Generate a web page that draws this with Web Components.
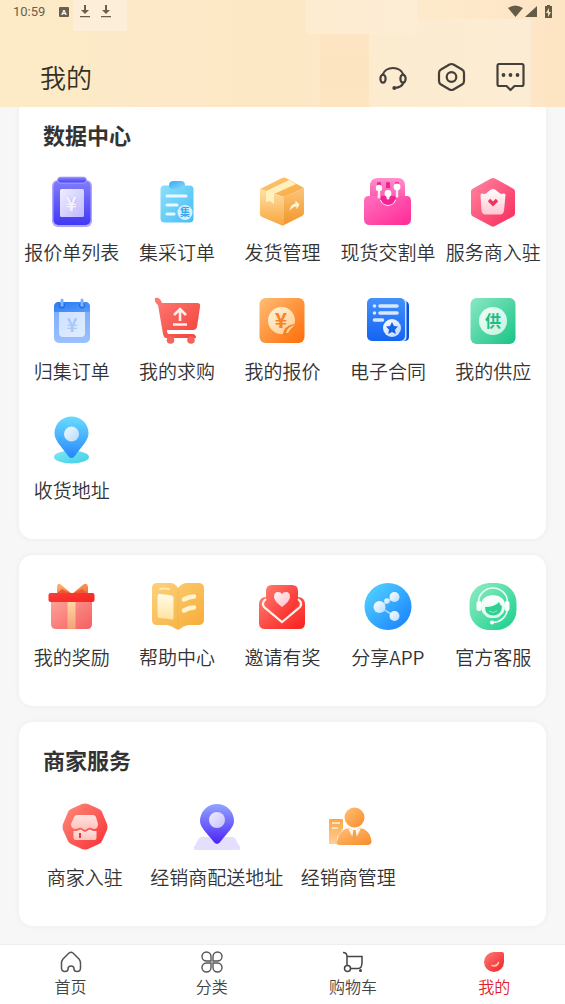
<!DOCTYPE html>
<html lang="zh-CN">
<head>
<meta charset="utf-8">
<meta name="viewport" content="width=device-width, initial-scale=1">
<title>我的</title>
<style>
    html, body {
        margin: 0;
        background: #f7f7f7;
        font-family: "Noto Sans CJK SC", "Noto Sans", sans-serif;
        color: #333333;
    }
</style>
</head>
<body>
<mine-page></mine-page>

<script>
// gradient helpers, ids only live inside the shadow root of one icon
const lin = (id, from, to, dir = 'x1="0" y1="0" x2="1" y2="1"') =>
    `<linearGradient id="${id}" ${dir}><stop offset="0" stop-color="${from}"/><stop offset="1" stop-color="${to}"/></linearGradient>`;
const down = 'x1="0" y1="0" x2="0" y2="1"';

const ICONS = {
    quote: `
        <defs>${lin("a", "#8b84fa", "#4640f6", down)}${lin("b", "#f1efff", "#bcb8fb")}${lin("c", "#827cfa", "#4138f5", down)}</defs>
        <rect x="8" y="6" width="40" height="47" rx="6" fill="#aaa6fd"/>
        <rect x="9.500" y="7" width="37" height="44" rx="5" fill="url(#c)"/>
        <rect x="13.500" y="3" width="29" height="6" rx="3" fill="url(#a)" stroke="#b3b0fd" stroke-width=".8"/>
        <rect x="16" y="15" width="24" height="28" rx="1.500" fill="url(#b)"/>
        <text x="28" y="37" font-size="20" font-weight="bold" fill="#a6a0f1" text-anchor="middle">¥</text>
        <text x="27.500" y="36.500" font-size="20" font-weight="bold" fill="#f3f1ff" text-anchor="middle">¥</text>`,
    order: `
        <defs>${lin("a", "#8be0fb", "#48bdf6")}${lin("b", "#35aaf2", "#8adcfb")}</defs>
        <rect x="11.500" y="11.500" width="33" height="37" rx="4" fill="url(#a)"/>
        <path d="M25 7h7q4 0 4 4 0 4-4 4h-8q-4 0-4-4t5-4z" fill="url(#b)"/>
        <g stroke="#eaf9ff" stroke-width="3" stroke-linecap="round"><path d="M18 22h19M18 31h10M18 40h7"/></g>
        <circle cx="36" cy="38.500" r="7.500" fill="#d5f1ff"/>
        <text x="36" y="42" font-size="10" font-weight="bold" fill="#38a9ee" text-anchor="middle">集</text>`,
    parcel: `
        <defs>${lin("a", "#fdca7c", "#f9a63b")}${lin("b", "#ffe0a5", "#f8a640", down)}${lin("c", "#fbc57a", "#f2952a", down)}</defs>
        <path d="M6 15 28 4q2-1 4 0l18 10-20 9z" fill="url(#a)"/>
        <path d="M6 15l24 8v28q-1 1-3 0L8 43q-2-1-2-3z" fill="url(#b)"/>
        <path d="M30 23l20-9v25q0 2-2 3L30 51z" fill="url(#c)"/>
        <path d="M12 17 35 6l7 4-22 10v10l-4-3-4 1z" fill="#fff0bd"/>
        <path d="M35.500 37q1-7 6-7.500v-3l4 4-3 5v-3q-4 0-7 4.500z" fill="#fff5d6"/>`,
    spot: `
        <defs>${lin("a", "#ff92cd", "#ff4fa8", down)}${lin("b", "#ff71be", "#ff2996")}</defs>
        <path d="M10 26V12q0-8 8-8h20q7 0 7 8v14z" fill="url(#a)"/>
        <path d="M17 22V9q0-1 2-1t2 1v13M26 14V9q0-1 2-1t2 1v5M35 22V9q0-1 2-1t2 1v13" fill="#ee238f"/>
        <path d="M9 22h10q1 9 9 10 8-1 9-10h10q4 0 4 5v18q0 6-6 6H10q-6 0-6-6V27q0-5 5-5z" fill="url(#b)"/>
        <path d="M20 22h16q-1 9-8 9t-8-9z" fill="#f12494"/>
        <g stroke="#ffe6f4" stroke-width="3" stroke-linecap="round"><path d="M19 14v9M28 19v5M37 13v9"/></g>
        <g fill="#fff"><circle cx="19" cy="14" r="3.200"/><circle cx="28" cy="19.500" r="3.400"/><circle cx="37" cy="13" r="3.400"/></g>`,
    provider: `
        <defs>${lin("a", "#ff88a1", "#f8285a")}${lin("b", "#fff", "#ffc7d2", down)}</defs>
        <path d="M26 4.500q2-1 4 0l18 10q2 1 2 3v22q0 2-2 3L30 52q-2 1-4 0L8 42.500q-2-1-2-3v-22q0-2 2-3z" fill="url(#a)"/>
        <path d="M15.500 21q0-2 2-1.500 2 1 4-.5l4.500-3.500q2-1 4 0l4.500 3.500q2 1.500 4 .5 2-.5 2 1.500l-1.500 15.500q-.5 4-4 4H20.500q-3.500 0-4-4z" fill="url(#b)"/>
        <path d="M24 26l4 4 4-4" fill="none" stroke="#f3325f" stroke-width="3.400"/>`,
    calendar: `
        <defs>${lin("a", "#76a8fa", "#9bc1fd", down)}${lin("b", "#2679f3", "#5a9cf9")}${lin("c", "#cfe1ff", "#e1edff")}</defs>
        <rect x="10" y="9" width="36" height="41" rx="5" fill="url(#a)"/>
        <path d="M10 19v-5q0-5 5-5h26q5 0 5 5v5z" fill="url(#b)"/>
        <path d="M15 19h26v21q0 4-4 4H19q-4 0-4-4z" fill="url(#c)"/>
        <g stroke="#1764df" fill="none" stroke-width="1"><circle cx="18" cy="12.500" r="2.500"/><circle cx="38" cy="12.500" r="2.500"/></g>
        <path d="M18 7v5M38 7v5" stroke="#7db2ff" stroke-width="3" stroke-linecap="round"/>
        <text x="28" y="39" font-size="19" font-weight="bold" fill="#a9c8fb" text-anchor="middle">¥</text>`,
    buy: `
        <defs>${lin("a", "#fd7c74", "#f34039")}</defs>
        <path d="M6 5q5-1 7 5h35q4 0 3 4l-3 20q-1 3-4 3H18l1 4h24q4 0 4 4H17q-2 0-3-4L9 12q-4-3-3-7z" fill="url(#a)"/>
        <path d="M18 37.500h28v2.500H18.600z" fill="#fff"/>
        <circle cx="21.500" cy="47" r="3.800" fill="#f4635c"/><circle cx="42" cy="47" r="3.800" fill="#f4635c"/>
        <path d="M31 28V17M25 22l6-6 6 6M24 31.500h14" fill="none" stroke="#fff0ee" stroke-width="2.600"/>`,
    price: `
        <defs>${lin("a", "#ffbd75", "#fe6c07")}${lin("b", "#fff6df", "#ffca88")}</defs>
        <rect x="5.500" y="5" width="45" height="45" rx="6" fill="url(#a)"/>
        <circle cx="27.500" cy="27.500" r="13.500" fill="url(#b)"/>
        <text x="27" y="35" font-size="21" font-weight="bold" fill="#f98322" text-anchor="middle">¥</text>
        <path d="M29 42q0-9 11-11l3 3-10 9z" fill="#fb801f"/><path d="M32 40q1-6 9-8-4 3-7 8z" fill="#ffd09c"/>`,
    contract: `
        <defs>${lin("a", "#4391fb", "#1464f2", down)}${lin("b", "#fff", "#b9d5ff")}</defs>
        <path d="M38 8h6q5 0 5 5v31q0 4-5 4h-9z" fill="#0753d9"/>
        <rect x="36" y="6" width="10.500" height="42" rx="4" fill="#cfe2ff"/>
        <rect x="7" y="5" width="38" height="43" rx="5" fill="url(#a)"/>
        <g stroke="#d7e7ff" stroke-width="3.600" stroke-linecap="round"><path d="M14.500 13h0M20 13h17M14.500 20h0M20 20h17M14.500 27h8"/></g>
        <circle cx="32" cy="35" r="9" fill="url(#b)"/>
        <path d="M32 29l2 4 4 .6-3 3.100.8 4.300-3.800-2-3.800 2 .8-4.300-3-3.100 4-.6z" fill="#1a63e8"/>`,
    supply: `
        <defs>${lin("a", "#8be8c3", "#18c487")}${lin("b", "#effff8", "#c3f3df")}</defs>
        <rect x="5.500" y="5" width="45" height="46" rx="6" fill="url(#a)"/>
        <circle cx="28" cy="28" r="14" fill="url(#b)"/>
        <text x="28" y="34" font-size="16" font-weight="bold" fill="#20bc86" text-anchor="middle">供</text>`,
    address: `
        <defs>${lin("a", "#69dcfd", "#2786ff", down)}${lin("b", "#81e7f3", "#3ecfe9")}${lin("c", "#f1f9ff", "#b5dcfa")}</defs>
        <ellipse cx="27.500" cy="45" rx="17.500" ry="6.500" fill="url(#b)"/>
        <path d="M27.500 46Q25 46 22 41C16 33 10.500 28 10.500 21a17 16.500 0 0 1 34 0c0 7-5.500 12-11.500 20q-3 5-5.500 5z" fill="url(#a)"/>
        <circle cx="27.500" cy="22" r="7.500" fill="url(#c)"/>`,
    gift: `
        <defs>${lin("a", "#fda19a", "#f55f5f")}${lin("b", "#f73e39", "#fb2420")}${lin("c", "#ffb375", "#f26c34")}${lin("d", "#ffd8a4", "#f4a276", down)}</defs>
        <path d="M27 14 16 5q-3-1-3 4v6zM29 14 40 5q4-1 4 4v6z" fill="url(#c)"/>
        <path d="M26 14l-8-4-5 4zM30 14l8-4 5 4z" fill="#e85b33"/>
        <path d="M7 22h41v23q0 5-5 5H12q-5 0-5-5z" fill="url(#a)"/>
        <rect x="23.500" y="22" width="8" height="28" fill="url(#d)"/>
        <rect x="4.500" y="14" width="46" height="9" rx="2" fill="url(#b)"/>`,
    help: `
        <defs>${lin("a", "#fcd27c", "#f7ab36")}${lin("b", "#fffce9", "#ffe4a1", down)}</defs>
        <path d="M8 4h13q5 0 8 5 4-5 9-5h11q6 0 6 5v32q0 5-6 5H39q-5 1-8 4-2 1-4 0-4-3-9-4H8q-5 0-5-5V9q0-5 5-5z" fill="url(#a)"/>
        <path d="M29 9v41" stroke="#eea438" stroke-width=".6" opacity=".4"/>
        <path d="M8.500 17q0-2 2-2 6 0 12 1.500 2 .5 2 2V39q0 2-2 1.500-6-1.500-12-1.500-2 0-2-2z" fill="url(#b)"/>
        <path d="M11 10q5-1 9 0" stroke="#ffe9b9" stroke-width="2" stroke-linecap="round" fill="none"/>
        <path d="M35 20.500q5-3 10-3M35 31.500q5-3 10-3" stroke="#fff4cc" stroke-width="4.500" stroke-linecap="round" fill="none"/>`,
    invite: `
        <defs>${lin("a", "#ff796d", "#f91e1e")}${lin("b", "#fff5f8", "#ffb8c8")}</defs>
        <path d="M5 26q0-8 7-8h32q7 0 7 8v18q0 6-6 6H11q-6 0-6-6z" fill="url(#a)"/>
        <path d="M12 26V12q0-6 6-6h20q6 0 6 6v14L28 43z" fill="url(#a)"/>
        <path d="M12 20q-5 4-2 8l18 15 18-15q3-4-2-8" fill="none" stroke="#fff3ea" stroke-width="2.200"/>
        <path d="M28 28q-8-6-8-10 0-5 4-5 3 0 4 2 1-2 4-2 4 0 4 5 0 4-8 10z" fill="url(#b)"/>`,
    share: `
        <defs>${lin("a", "#56d9ff", "#157cff")}${lin("b", "#fff", "#b4ddff")}</defs>
        <circle cx="28" cy="27.500" r="23.500" fill="url(#a)"/>
        <path d="M34 18 20 28l14 9" fill="none" stroke="#9cd5ff" stroke-width="1.800"/>
        <g fill="url(#b)"><circle cx="19.500" cy="28" r="6"/><circle cx="34.500" cy="18" r="5"/><circle cx="27" cy="22" r="2.800"/><circle cx="34.500" cy="37" r="5"/></g>`,
    support: `
        <defs>${lin("a", "#92edc4", "#17cf8b")}${lin("b", "#fff", "#ddfaec", down)}</defs>
        <rect x="4.500" y="4" width="47" height="47" rx="20" fill="url(#a)"/>
        <path d="M13.500 23a14.500 14 0 0 1 29 0" fill="none" stroke="#e8fff5" stroke-width="1.600"/>
        <rect x="11.500" y="22" width="5" height="10" rx="2.500" fill="#fff"/><rect x="39.500" y="22" width="5" height="10" rx="2.500" fill="#fff"/>
        <path d="M16 27q0-10 12-11 12 1 12 11 0 7-5 10-1 2-7 2t-7-2q-5-3-5-10z" fill="url(#b)"/>
        <path d="M20 28q10 0 14-5 1 3 3 4 0 9-9 9.500-8-.5-8-8.500z" fill="#30d092"/>
        <path d="M24 32q4 3 8 0" fill="none" stroke="#8cebc2" stroke-width="1"/>
        <path d="M42.500 31q-3 12-15 12.500" fill="none" stroke="#eafff5" stroke-width="1.500"/><circle cx="27" cy="43.500" r="2" fill="#fff"/>`,
    shop: `
        <defs>${lin("a", "#ff8e7c", "#f72d34")}${lin("b", "#ffe3de", "#ffc1bd", down)}</defs>
        <path d="M25 5q3-1 6 0l11 5q2 1 3 3l5 12q1 3 0 6l-5 11q-1 2-3 3l-11 5q-3 1-6 0l-11-5q-2-1-3-3L6 31q-1-3 0-6l5-12q1-2 3-3z" fill="url(#a)"/>
        <path d="M20 16h16q2 0 3 2l2 7q0 5-4 5l-4.500-1.500L28 31l-4.500-2.500L19 30q-5 0-5-5l3-7q1-2 3-2z" fill="url(#b)"/>
        <path d="M16.500 32h3l4-1.500L28 33l4.500-2.500 4 1.500h3v7q0 2-2 2h-19q-2 0-2-2z" fill="url(#b)"/>
        <path d="M23 34v5" stroke="#e63b3e" stroke-width="2"/>`,
    delivery: `
        <defs>${lin("a", "#92a4ff", "#4a24f7", down)}${lin("b", "#f0edff", "#c6bffa")}</defs>
        <path d="M13 38h30q3 0 4 3l4 7q1 3-2 3H7q-3 0-2-3l4-7q1-3 4-3z" fill="#e5dffc"/>
        <path d="M28 45q-2 0-4-3C17 33 11 28 11 22a17 17 0 0 1 34 0c0 6-6 11-13 20q-2 3-4 3z" fill="url(#a)"/>
        <circle cx="28" cy="21" r="8" fill="url(#b)"/>`,
    dealer: `
        <defs>${lin("a", "#ffc178", "#f98a2b")}${lin("b", "#fda747", "#ffcf99", down)}</defs>
        <path d="M10 20h12q1 0 1 1v9l-6 9v6h-7q-1 0-1-1V21q0-1 1-1z" fill="url(#b)"/>
        <path d="M12 24h8M12 29h6" stroke="#fff3e1" stroke-width="1.600"/>
        <circle cx="34.500" cy="18.500" r="10" fill="url(#a)"/>
        <path d="M17 43q1-9 8-13l4-1 5.500 3 5.500-3 4 1q6 3 7.500 12 0 4-4 4H20q-4 0-3-3z" fill="url(#a)"/>
        <path d="M28 29l6.500 13L41 29l-6.500 3z" fill="#fff8ee"/>
        <path d="M33.500 31h2l1.500 8-2.500 4-2.500-4z" fill="#fb9e45"/>`
};

const LINE_ICONS = {
    headset: `<g fill="none" stroke="#443f38" stroke-width="2.200" stroke-linecap="round">
        <path d="M5.500 14a11 10 0 0 1 21 0M26.500 21.500q-2 5-8.500 5.500"/><ellipse cx="6" cy="17.700" rx="2.600" ry="4"/><ellipse cx="26" cy="17.700" rx="2.600" ry="4"/></g>
        <circle cx="17.300" cy="27" r="2" fill="#443f38"/>`,
    setting: `<g fill="none" stroke="#443f38" stroke-width="2.200">
        <path d="M13.500 3.500q2-1 4 0l8.500 5q2 1 2 3.500v8q0 2.500-2 3.500l-8.500 5q-2 1-4 0l-8.500-5Q3 22.500 3 20v-8q0-2.500 2-3.500z"/><circle cx="15.500" cy="16" r="4.800"/></g>`,
    message: `<path d="M4 3h23q1.500 0 1.500 2v18q0 2-1.500 2h-7.500L15.500 29l-4-4H4q-1.500 0-1.500-2V5q0-2 1.500-2z" fill="none" stroke="#443f38" stroke-width="2.200" stroke-linejoin="round"/>
        <g fill="#443f38"><circle cx="8.500" cy="14" r="1.900"/><circle cx="15.500" cy="14" r="1.900"/><circle cx="22.500" cy="14" r="1.900"/></g>`
};

const TAB_ICONS = {
    home: `<path d="M10 3q2-1.500 4 0l6 6q1.500 2 1.500 4v5q0 3.500-3.500 3.500-3 0-3-2.500a3 3 0 0 0-6 0q0 2.500-3 2.500-3.500 0-3.500-3.500v-5q0-2 1.500-4z" fill="none" stroke="#555" stroke-width="1.500"/>`,
    category: `<path d="M11 11H6.500A4.500 4.500 0 1 1 11 6.500zM13 11V6.500A4.500 4.500 0 1 1 17.500 11zM11 13v4.500A4.500 4.500 0 1 1 6.500 13zM13 13h4.500A4.500 4.500 0 1 1 13 17.500z" fill="none" stroke="#555" stroke-width="1.400"/>`,
    cart: `<path d="M2 2.500q4 0 4 4V15M6 6.500h15v6q0 6-4 6H9.500" fill="none" stroke="#444" stroke-width="1.500"/>
        <circle cx="6.500" cy="18.500" r="3" fill="none" stroke="#444" stroke-width="1.500"/><circle cx="19.500" cy="20.500" r="1.500" fill="#444"/>`,
    mine: `<defs>${lin("a", "#ff7c78", "#ee2028")}</defs><path d="M12 2h8q2 0 2 2v8A10 10 0 1 1 12 2z" fill="url(#a)"/>
        <path d="M10 15.500q5 1.500 6.500-3" fill="none" stroke="#ffc7a8" stroke-width="1.500" stroke-linecap="round"/>`
};

class StatusBar extends HTMLElement {

    constructor() {
        super();
        this.attachShadow({ mode: "open" });
    }

    connectedCallback() {
        this.shadowRoot.innerHTML = `
            <style>
                :host {
                    display: flex;
                    align-items: center;
                    height: 24px;
                    padding: 0 13px;
                    font: 13px/24px Roboto, sans-serif;
                    color: #6b5f4b;
                }
                svg { display: block; }
                .left, .right { display: flex; align-items: center; }
                .left { flex: 1; gap: 11px; }
                .right { gap: 2px; }
                time { margin-right: 3px; }
            </style>
            <div class="left">
                <time>10:59</time>
                <svg width="10" height="12" viewBox="0 0 10 12"><rect y="1" width="10" height="10" rx="1" fill="#6b5f4b"/><text x="5" y="9" font-size="8" font-weight="bold" fill="#fff" text-anchor="middle">A</text></svg>
                <svg width="10" height="14" viewBox="0 0 10 14"><path d="M4 0h2v5h3L5 9 1 5h3zM0 11h10v1.200H0z" fill="#6b5f4b"/></svg>
                <svg width="10" height="14" viewBox="0 0 10 14"><path d="M4 0h2v5h3L5 9 1 5h3zM0 11h10v1.200H0z" fill="#6b5f4b"/></svg>
            </div>
            <div class="right">
                <svg width="15" height="14" viewBox="0 0 15 14"><path d="M0 3q7-5 15 0L7.500 12z" fill="#655c47"/></svg>
                <svg width="12" height="14" viewBox="0 0 12 14"><path d="M12 1v11H0z" fill="#655c47"/></svg>
                <svg width="13" height="14" viewBox="0 0 13 14"><path d="M6 1h2V0h3v1h2v12H6z" fill="#655c47"/><path d="M10 3l-3 5h2v4l3-5h-2z" fill="#f3e3c3"/></svg>
            </div>
        `
    }
}

class PageHeader extends HTMLElement {

    constructor() {
        super();
        this.attachShadow({ mode: "open" });
    }

    connectedCallback() {
        this.shadowRoot.innerHTML = `
            <style>
                :host {
                    display: block;
                    position: sticky;
                    top: 0;
                    z-index: 2;
                    /* pale blocks of the banner */
                    background:
                        linear-gradient(#fdeed9, #fdeed9) 73px 0 / 54px 31px no-repeat,
                        linear-gradient(90deg, #fdeccf, #fdedd6) right 148px top 0 / 111px 34px no-repeat,
                        linear-gradient(#fde4c3, #fde5bf) right 196px top 34px / 49px 73px no-repeat,
                        linear-gradient(90deg, #fcebcf, #fbedd4) right 34px top 19px / 162px 88px no-repeat,
                        linear-gradient(90deg, #fdeac6 0%, #fce9c7 20%, #fce8c5 50%, #fdeacb 80%, #fde5c6 94%, #fde4c2 100%);
                }
                .bar {
                    display: flex;
                    align-items: center;
                    justify-content: space-between;
                    padding: 34px 38px 11px 40px;
                }
                h1 {
                    margin: 0;
                    font-size: 26px;
                    line-height: 38px;
                    font-weight: 350;
                    color: #333026;
                }
                .actions { display: flex; gap: 27px; }
                button {
                    padding: 0;
                    border: 0;
                    background: none;
                    width: 32px;
                    height: 32px;
                    cursor: pointer;
                }
                svg { display: block; width: 32px; height: 32px; }
            </style>
            <status-bar></status-bar>
            <div class="bar">
                <h1><slot></slot></h1>
                <div class="actions">
                    <button type="button" aria-label="客服"><svg viewBox="0 0 32 32">${LINE_ICONS.headset}</svg></button>
                    <button type="button" aria-label="设置"><svg viewBox="0 0 32 32">${LINE_ICONS.setting}</svg></button>
                    <button type="button" aria-label="消息"><svg viewBox="0 0 32 32">${LINE_ICONS.message}</svg></button>
                </div>
            </div>
        `
    }
}

class ServiceCard extends HTMLElement {

    constructor() {
        super();
        this.attachShadow({ mode: "open" });
    }

    connectedCallback() {
        const title = this.getAttribute("heading");
        const columns = this.getAttribute("columns") || 5;

        this.shadowRoot.innerHTML = `
            <style>
                :host {
                    display: block;
                    padding: 24px 0 37px;
                    border-radius: 14px;
                    background: #ffffff;
                    box-shadow: 0 0 6px rgba(0, 0, 0, 0.05);
                }
                h2 {
                    margin: 0 24px 27px;
                    font-size: 22px;
                    line-height: 26px;
                    font-weight: 700;
                }
                .grid {
                    display: grid;
                    grid-template-columns: repeat(${columns}, minmax(0, 1fr));
                    row-gap: 29px;
                }
            </style>
            ${title ? `<h2>${title}</h2>` : ""}
            <div class="grid"><slot></slot></div>
        `
    }
}

class ServiceItem extends HTMLElement {

    constructor() {
        super();
        this.attachShadow({ mode: "open" });
    }

    connectedCallback() {
        const icon = this.getAttribute("icon");

        this.shadowRoot.innerHTML = `
            <style>
                :host { display: block; }
                a {
                    display: flex;
                    flex-direction: column;
                    align-items: center;
                    gap: 10px;
                    color: inherit;
                    text-decoration: none;
                    font-size: 19px;
                    font-weight: 350;
                    line-height: 24px;
                    white-space: nowrap;
                }
                svg { display: block; width: 56px; height: 56px; }
            </style>
            <a href="#${icon}">
                <svg viewBox="0 0 56 56" aria-hidden="true">${ICONS[icon]}</svg>
                <span><slot></slot></span>
            </a>
        `
    }
}

class TabItem extends HTMLElement {

    constructor() {
        super();
        this.attachShadow({ mode: "open" });
    }

    connectedCallback() {
        const icon = this.getAttribute("icon");

        this.shadowRoot.innerHTML = `
            <style>
                :host { display: block; flex: 1; color: #444444; }
                :host([active]) { color: #e3202a; }
                a {
                    display: flex;
                    flex-direction: column;
                    align-items: center;
                    gap: 2px;
                    padding: 5px 0 8px;
                    color: inherit;
                    text-decoration: none;
                    font-size: 16px;
                    font-weight: 350;
                    line-height: 20px;
                }
                svg { display: block; width: 24px; height: 24px; }
            </style>
            <a href="#${icon}">
                <svg viewBox="0 0 24 24" aria-hidden="true">${TAB_ICONS[icon]}</svg>
                <span><slot></slot></span>
            </a>
        `
    }
}

class TabBar extends HTMLElement {

    constructor() {
        super();
        this.attachShadow({ mode: "open" });
    }

    connectedCallback() {
        this.shadowRoot.innerHTML = `
            <style>
                :host {
                    display: block;
                    position: sticky;
                    bottom: 0;
                    z-index: 2;
                    background: #ffffff;
                    border-top: 1px solid #eeeeee;
                }
                nav { display: flex; }
            </style>
            <nav><slot></slot></nav>
        `
    }
}

class MinePage extends HTMLElement {

    constructor() {
        super();
        this.attachShadow({ mode: "open" });
    }

    connectedCallback() {
        this.shadowRoot.innerHTML = `
            <style>
                :host {
                    display: flex;
                    flex-direction: column;
                    min-height: 100vh;
                }
                main {
                    flex: 1;
                    display: flex;
                    flex-direction: column;
                    gap: 16px;
                    /* the first card starts under the header */
                    margin-top: -10px;
                    padding: 0 19px 18px;
                }
            </style>
            <page-header>我的</page-header>
            <main>
                <service-card heading="数据中心">
                    <service-item icon="quote">报价单列表</service-item>
                    <service-item icon="order">集采订单</service-item>
                    <service-item icon="parcel">发货管理</service-item>
                    <service-item icon="spot">现货交割单</service-item>
                    <service-item icon="provider">服务商入驻</service-item>
                    <service-item icon="calendar">归集订单</service-item>
                    <service-item icon="buy">我的求购</service-item>
                    <service-item icon="price">我的报价</service-item>
                    <service-item icon="contract">电子合同</service-item>
                    <service-item icon="supply">我的供应</service-item>
                    <service-item icon="address">收货地址</service-item>
                </service-card>
                <service-card>
                    <service-item icon="gift">我的奖励</service-item>
                    <service-item icon="help">帮助中心</service-item>
                    <service-item icon="invite">邀请有奖</service-item>
                    <service-item icon="share">分享APP</service-item>
                    <service-item icon="support">官方客服</service-item>
                </service-card>
                <service-card heading="商家服务" columns="4">
                    <service-item icon="shop">商家入驻</service-item>
                    <service-item icon="delivery">经销商配送地址</service-item>
                    <service-item icon="dealer">经销商管理</service-item>
                </service-card>
            </main>
            <tab-bar>
                <tab-item icon="home">首页</tab-item>
                <tab-item icon="category">分类</tab-item>
                <tab-item icon="cart">购物车</tab-item>
                <tab-item icon="mine" active>我的</tab-item>
            </tab-bar>
        `
    }
}

customElements.define("status-bar", StatusBar);
customElements.define("page-header", PageHeader);
customElements.define("service-card", ServiceCard);
customElements.define("service-item", ServiceItem);
customElements.define("tab-item", TabItem);
customElements.define("tab-bar", TabBar);
customElements.define("mine-page", MinePage);
</script>
</body>
</html>
